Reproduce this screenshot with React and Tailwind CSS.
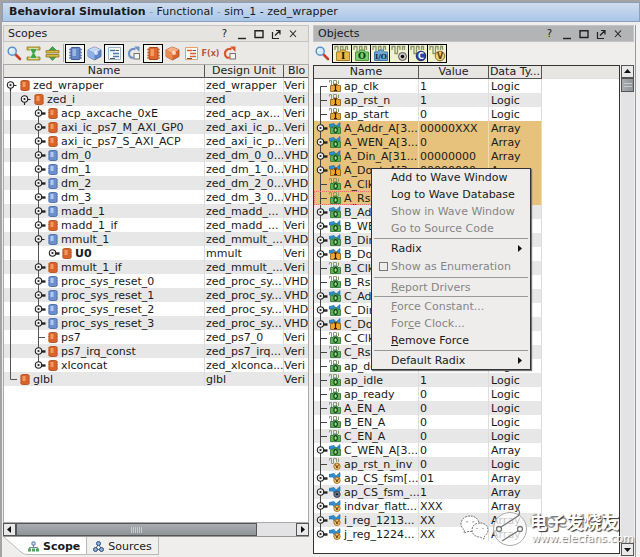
import React from "react";

const SCOPES = [
  ["zed_wrapper", "zed_wrapper", "Veri", 0, "open", "o"],
  ["zed_i", "zed", "Veri", 1, "open", "o"],
  ["acp_axcache_0xE", "zed_acp_ax...", "Veri", 2, "closed", "o"],
  ["axi_ic_ps7_M_AXI_GP0", "zed_axi_ic_p...", "Veri", 2, "closed", "o"],
  ["axi_ic_ps7_S_AXI_ACP", "zed_axi_ic_p...", "Veri", 2, "closed", "o"],
  ["dm_0", "zed_dm_0_0...", "VHD", 2, "closed", "b"],
  ["dm_1", "zed_dm_1_0...", "VHD", 2, "closed", "b"],
  ["dm_2", "zed_dm_2_0...", "VHD", 2, "closed", "b"],
  ["dm_3", "zed_dm_3_0...", "VHD", 2, "closed", "b"],
  ["madd_1", "zed_madd_...", "VHD", 2, "closed", "b"],
  ["madd_1_if", "zed_madd_...", "Veri", 2, "closed", "o"],
  ["mmult_1", "zed_mmult_...", "VHD", 2, "open", "b"],
  ["U0", "mmult", "Veri", 3, "closed", "o"],
  ["mmult_1_if", "zed_mmult_...", "Veri", 2, "closed", "o"],
  ["proc_sys_reset_0", "zed_proc_sy...", "VHD", 2, "closed", "b"],
  ["proc_sys_reset_1", "zed_proc_sy...", "VHD", 2, "closed", "b"],
  ["proc_sys_reset_2", "zed_proc_sy...", "VHD", 2, "closed", "b"],
  ["proc_sys_reset_3", "zed_proc_sy...", "VHD", 2, "closed", "b"],
  ["ps7", "zed_ps7_0", "Veri", 2, "leaf", "o"],
  ["ps7_irq_const", "zed_ps7_irq...", "Veri", 2, "closed", "o"],
  ["xlconcat", "zed_xlconca...", "Veri", 2, "last", "o"],
  ["glbl", "glbl", "Veri", 0, "end", "o"],
];

// name, value, data type, icon kind, expandable, selected
const OBJECTS = [
  ["ap_clk", "1", "Logic", "in"],
  ["ap_rst_n", "1", "Logic", "in"],
  ["ap_start", "0", "Logic", "in"],
  ["A_Addr_A[3...", "00000XXX", "Array", "out", true, true],
  ["A_WEN_A[3...", "0", "Array", "out", true, true],
  ["A_Din_A[31...", "00000000", "Array", "out", true, true],
  ["A_Dout_A[3...", "00000000", "Array", "in", true, true],
  ["A_Clk_A", "0", "Logic", "out", false, true],
  ["A_Rst_A", "0", "Logic", "out", false, true],
  ["B_Addr_A[3...", "00000XXX", "Array", "out", true],
  ["B_WEN_A[3...", "0", "Array", "out", true],
  ["B_Din_A[31...", "00000000", "Array", "out", true],
  ["B_Dout_A[3...", "00000000", "Array", "in", true],
  ["B_Clk_A", "0", "Logic", "out"],
  ["B_Rst_A", "0", "Logic", "out"],
  ["C_Addr_A[3...", "00000XXX", "Array", "out", true],
  ["C_Din_A[31...", "00000000", "Array", "out", true],
  ["C_Dout_A[3...", "00000000", "Array", "in", true],
  ["C_Clk_A", "0", "Logic", "out"],
  ["C_Rst_A", "0", "Logic", "out"],
  ["ap_done", "0", "Logic", "out"],
  ["ap_idle", "1", "Logic", "out"],
  ["ap_ready", "0", "Logic", "out"],
  ["A_EN_A", "0", "Logic", "out"],
  ["B_EN_A", "0", "Logic", "out"],
  ["C_EN_A", "0", "Logic", "out"],
  ["C_WEN_A[3...", "0", "Array", "out", true],
  ["ap_rst_n_inv", "0", "Logic", "var"],
  ["ap_CS_fsm[...", "01", "Array", "var", true],
  ["ap_CS_fsm_...", "1", "Array", "sig", true],
  ["indvar_flatt...", "XXX", "Array", "var", true],
  ["i_reg_1213...", "XX", "Array", "var", true],
  ["j_reg_1224...", "XX", "Array", "var", true],
];

function Handle({ x, open }) {
  return (
    <g stroke="#222">
      {open ? <path d={`M${x} 7V13M${x + 3} 7.5H${x + 6}`} strokeWidth="1.2" /> : <path d={`M${x + 2} 7.5H${x + 7}`} strokeWidth="2.4" />}
      <circle cx={x} cy="7" r="3.2" fill="#f2f2f2" strokeWidth="1.1" />
      <circle cx={x} cy="7" r="1.1" fill="#222" stroke="none" />
    </g>
  );
}

function TreeGuide({ depth, kind }) {
  const x = 6.5 + depth * 14;
  return (
    <svg width={16 + depth * 14} height="14" className="shrink-0" fill="none" aria-hidden="true">
      <g stroke="#555">
        {kind === "end" ? <path d="M6.5 0V7.5H13" /> : <path d={depth === 0 ? "M6.5 7V14" : "M6.5 0V14"} />}
        {depth >= 2 && <path d={kind === "last" ? "M34.5 0V7" : "M34.5 0V14"} />}
        {kind === "leaf" && <path d="M34.5 7.5H41" />}
      </g>
      {kind !== "end" && kind !== "leaf" && <Handle x={x} open={kind === "open"} />}
    </svg>
  );
}

function Chip({ color }) {
  const orange = color === "o";
  return (
    <svg width="10" height="14" className="shrink-0" aria-hidden="true">
      <path d="M0 4H10M0 6.500H10M0 9H10M0 11H10" stroke={orange ? "#d9925f" : "#8ba6d6"} />
      <rect x="1" y="2.5" width="8" height="10" rx="1.5" fill={orange ? "#d9642a" : "#6d8fce"} stroke={orange ? "#b9582a" : "#5474ae"} />
      <path d="M2.5 4H5.5V9H2.5Z" fill={orange ? "#f09a62" : "#b3c8ee"} />
    </svg>
  );
}

const KIND = {
  in: ["#efa62c", "#8b5a10"],
  out: ["#5cae58", "#2c7432"],
  var: ["#f0c860", "#a0662a"],
  sig: ["#667586", "#333f4c"],
};

function SignalIcon({ kind, array }) {
  const [fill, edge] = KIND[kind];
  return (
    <svg width="13" height="14" className="shrink-0" fill="none" aria-hidden="true">
      {array ? (
        <path d="M0 3.5L5 2.5L7 5L11 1.5V6L8 8H5L4 6H0Z" fill="#2f8fd0" stroke="#1d639c" strokeWidth="0.6" />
      ) : (
        <path d="M0.5 3.5V1.5H2.5V6.5H4.5V1.5H7.5V5M9.5 5V1.5" stroke="#8c9a72" />
      )}
      {kind === "in" || kind === "out" ? (
        <g>
          <path d="M1.5 6.5H4L5 5H8L9 6.5H11.5V12.5H1.5Z" fill={fill} stroke={edge} strokeWidth="0.8" />
          {kind === "in" ? <path d="M5 6H8M6.5 6V11.5M5 11.5H8" stroke="#2a1c00" strokeWidth="1.2" /> : <ellipse cx="6.6" cy="9" rx="1.7" ry="2.4" fill="#9ee08c" stroke="#0d3c12" strokeWidth="1.1" />}
        </g>
      ) : (
        <g>
          <circle cx="8" cy="9.3" r="3.2" fill={fill} stroke={edge} strokeWidth="0.9" />
          {kind === "var" ? <path d="M6.5 7.5L8 11L9.5 7.5" stroke="#6b3410" /> : <circle cx="8" cy="9.3" r="1" fill="#111" />}
        </g>
      )}
    </svg>
  );
}

function ObjectGuide({ first, last, expandable }) {
  return (
    <svg width="15" height="14" className="shrink-0" fill="none" aria-hidden="true">
      <path d={first ? "M6.5 14V7.5H13" : last ? "M6.5 0V7" : "M6.5 0V14"} stroke="#444" />
      {expandable ? <Handle x={6.5} /> : <path d="M6.5 7.5H13" stroke="#444" />}
    </svg>
  );
}

function SearchIcon() {
  return (
    <svg width="15" height="15" viewBox="0 0 15 15" fill="none" aria-hidden="true">
      <path d="M8.5 8.5L13 13" stroke="#c8402c" strokeWidth="2.6" strokeLinecap="round" />
      <circle cx="5.2" cy="5.2" r="4" fill="#d6ecfa" stroke="#5a92c8" strokeWidth="1.5" />
      <path d="M3 5A2.2 2.2 0 0 1 5 3" stroke="#fff" strokeWidth="1.2" />
    </svg>
  );
}

function CollapseIcon() {
  return (
    <svg width="15" height="15" viewBox="0 0 15 15" aria-hidden="true">
      <path d="M1 1H14V4H1ZM1 11H14V14H1Z" fill="#d9b944" stroke="#8c7a26" strokeWidth="0.8" />
      <path d="M3.5 2.5H11.5L8.7 7.5L11.5 12.5H3.5L6.3 7.5Z" fill="#3fa34a" stroke="#dff0cf" strokeWidth="0.8" />
    </svg>
  );
}

function ExpandIcon() {
  return (
    <svg width="15" height="15" viewBox="0 0 15 15" aria-hidden="true">
      <path d="M7.5 0.5L11.5 4.5H3.5ZM7.5 14.5L11.5 10.5H3.5Z" fill="#3fa34a" stroke="#2c7434" strokeWidth="0.5" />
      <path d="M1 4.5H14V7H1ZM1 8.5H14V11H1Z" fill="#d9b944" stroke="#8c7a26" strokeWidth="0.8" />
    </svg>
  );
}

function BigChip({ orange }) {
  const dark = orange ? "#a8461a" : "#3c5c9c";
  return (
    <svg width="15" height="15" viewBox="0 0 15 15" aria-hidden="true">
      <path d="M1 3.5H14M1 6.5H14M1 9.5H14M1 12H14" stroke={orange ? "#d08a58" : "#7890b8"} strokeWidth="1.4" />
      <rect x="3" y="1.5" width="9" height="12" rx="1" fill={orange ? "#e0682a" : "#6488c8"} stroke={dark} />
      <path d="M4.5 3H8V10H4.5Z" fill={orange ? "#f49a60" : "#9cb6e4"} />
    </svg>
  );
}

function CubeIcon({ orange }) {
  return (
    <svg width="15" height="15" viewBox="0 0 15 15" aria-hidden="true">
      <path d="M7.5 1L14 3.8V10.5L7.5 14L1 10.5V3.8Z" fill={orange ? "#d8662c" : "#5c86cc"} stroke={orange ? "#a34a20" : "#42659f"} strokeWidth="0.8" />
      <path d="M7.5 1L14 3.8L7.5 7L1 3.8Z" fill={orange ? "#f3b085" : "#c3d8f4"} />
      <path d="M7.5 7V14L1 10.5V3.8Z" fill={orange ? "#e88a52" : "#8fb0e4"} />
      <circle cx="9" cy="7" r="2" fill="#fff" opacity="0.7" />
    </svg>
  );
}

function DocIcon({ orange }) {
  const c = orange ? "#d8642a" : "#4878b8";
  return (
    <svg width="15" height="15" viewBox="0 0 15 15" fill="none" aria-hidden="true">
      <path d="M1.5 1.5H13.5V13.5H1.5Z" fill="#fbfbf6" stroke={orange ? "#e3a06c" : "#9cb4cc"} />
      <path d="M3 4.5H8M6 7.5H12M6 10.5H12" stroke={c} strokeWidth="1.5" />
      <path d="M8.5 4.5H12M3 12.5H8" stroke="#555" />
    </svg>
  );
}

function TaskIcon({ orange }) {
  const c = orange ? "#d8562a" : "#6d93c4";
  return (
    <svg width="15" height="15" viewBox="0 0 15 15" fill="none" aria-hidden="true">
      <path d="M9.500 3.200A4.800 4.800 0 1 0 6.500 12.300" stroke={c} strokeWidth="2.2" />
      <path d="M8 0.5H13.5V6Z" fill={c} />
      <rect x="8" y="7.5" width="5.5" height="5.5" fill="#f4f4f0" stroke="#77736c" />
      <path d="M5 11.500H8" stroke={c} strokeWidth="1.6" />
    </svg>
  );
}

function FilterIcon({ kind }) {
  const badge = {
    I: ["#e9b94a", "#a58030", "#1c1400"],
    O: ["#7fcc6c", "#4f9a48", "#063c0c"],
    "I/O": ["#6fa8d4", "#4478a8", "#0c2c4c"],
  }[kind];
  return (
    <svg width="17" height="17" viewBox="0 0 17 17" fill="none" aria-hidden="true">
      <path d="M1 5V1.5H4V8.5H6.5V1.5H9V5M11.5 5V1.5H13.5V5" stroke="#8c9468" strokeWidth="1.3" />
      {badge && <path d="M2.5 7H5.5L7 5H11L12.5 7H15.5V15.5H2.5Z" fill={badge[0]} stroke={badge[1]} />}
      {badge && (
        <text x="9" y="14" textAnchor="middle" fill={badge[2]} fontSize={kind === "I/O" ? 7 : 9} className="font-['DejaVu_Serif','Liberation_Serif',serif] font-bold">
          {kind}
        </text>
      )}
      {kind === "dot" && (
        <g>
          <circle cx="11.5" cy="11.5" r="4" fill="#c9c9c4" stroke="#555" />
          <circle cx="11.5" cy="11.5" r="1.8" fill="#111" />
        </g>
      )}
      {(kind === "C" || kind === "V") && (
        <g>
          <circle cx="11" cy="11" r="4.8" fill={kind === "C" ? "#2c449c" : "#ecd27a"} stroke={kind === "C" ? "#1c2c70" : "#8a6c24"} />
          <text x="11" y="14" textAnchor="middle" fontSize="8" fill={kind === "C" ? "#fff" : "#5c3c10"} className="font-['DejaVu_Sans',sans-serif] font-bold">
            {kind}
          </text>
        </g>
      )}
    </svg>
  );
}

const WINDOW_ICONS = [
  ["Minimize", <path key="a" d="M2 10.5H10" strokeWidth="1.4" />],
  ["Maximize", <path key="b" d="M2 2.7H10V9.5H2Z" strokeWidth="1.4" />],
  ["Float", <path key="c" d="M2.5 4V10.5H9M5 7.5L9.5 3M6 2.5H10V6.5" strokeWidth="1.2" />],
  ["Close", <path key="d" d="M3 2.5L9 9M9 2.5L3 9" strokeWidth="1.1" />],
];

function PanelHeader({ title, active }) {
  return (
    <header className={`flex h-[17px] shrink-0 items-center border border-[#c4c4c4] pr-[7px] pl-1 ${active ? "bg-[#b2b4b6]" : "bg-[#e6e4e1]"}`}>
      <h2 className="flex-1">{title}</h2>
      <button aria-label="Help" className="h-4 w-[17px] text-[10px] leading-4">?</button>
      {WINDOW_ICONS.map(([name, shape]) => (
        <button key={name} aria-label={name} className="flex h-4 w-[17px] items-center justify-center">
          <svg width="12" height="12" fill="none" stroke="#222">{shape}</svg>
        </button>
      ))}
    </header>
  );
}

function Tool({ label, on, children }) {
  return (
    <button aria-label={label} className={`flex h-[19px] shrink-0 items-center justify-center ${on ? "w-5 border border-black bg-[#f3f3ef]" : "w-[19px]"}`}>
      {children}
    </button>
  );
}

function ScrollButton({ label, d }) {
  return (
    <button aria-label={label} className="flex size-[13px] shrink-0 items-center justify-center border border-[#555] bg-[#e9e9e9]">
      <svg width="7" height="7"><path d={d} fill="#111" /></svg>
    </button>
  );
}

const TH = "h-[13px] overflow-hidden border-r border-b border-[#555] p-0 text-center leading-3 font-normal";

function ScopesPanel() {
  return (
    <section className="flex w-[306px] shrink-0 flex-col">
      <PanelHeader title="Scopes" />
      <div className="flex h-[22px] shrink-0 items-center border-x border-[#d0d0d0] bg-[#ebe9e6] pl-px">
        <Tool label="Search"><SearchIcon /></Tool>
        <Tool label="Collapse all"><CollapseIcon /></Tool>
        <Tool label="Expand all"><ExpandIcon /></Tool>
        <span className="mx-px h-[18px] w-px bg-[#aaa]" />
        <Tool label="VHDL modules" on><BigChip /></Tool>
        <Tool label="VHDL packages"><CubeIcon /></Tool>
        <Tool label="VHDL blocks" on><DocIcon /></Tool>
        <Tool label="VHDL processes"><TaskIcon /></Tool>
        <Tool label="Verilog modules" on><BigChip orange /></Tool>
        <Tool label="Verilog packages"><CubeIcon orange /></Tool>
        <Tool label="Verilog blocks"><DocIcon orange /></Tool>
        <Tool label="Functions"><span className="text-[8px] font-bold text-[#b8583a]">F(x)</span></Tool>
        <Tool label="Verilog tasks"><TaskIcon orange /></Tool>
      </div>
      <div className="flex-1 overflow-hidden border border-[#aaa] bg-white">
        <table className="w-full table-fixed border-separate border-spacing-0">
          <colgroup>
            <col />
            <col className="w-[79px]" />
            <col className="w-[24px]" />
          </colgroup>
          <thead className="bg-[#e8e6e3]">
            <tr>
              <th className={TH}>Name</th>
              <th className={TH}>Design Unit</th>
              <th className="h-[13px] overflow-hidden border-b border-[#555] p-0 pl-1 text-left leading-3 font-normal">Blo</th>
            </tr>
          </thead>
          <tbody>
            {SCOPES.map(([name, unit, block, depth, kind, color]) => (
              <tr key={name} className="even:bg-[#e7e7e7]">
                <td className="h-3.5 border-r border-[#ddd] p-0">
                  <div className="flex h-3.5 items-center">
                    <TreeGuide depth={depth} kind={kind} />
                    <Chip color={color} />
                    <span className={name === "U0" ? "pl-[3px] font-bold" : "pl-[3px]"}>{name}</span>
                  </div>
                </td>
                <td className="h-3.5 overflow-hidden border-r border-[#ddd] p-0 pl-px whitespace-nowrap">{unit}</td>
                <td className="h-3.5 overflow-hidden p-0 whitespace-nowrap">{block}</td>
              </tr>
            ))}
          </tbody>
        </table>
      </div>
      <div className="flex shrink-0 border-b border-[#999] bg-[#e3e3e5]">
        <ScrollButton label="Scroll left" d="M5 0V7L1 3.5Z" />
        <div className="flex flex-1">
          <div className="flex w-[86%] items-center justify-center gap-px border border-[#555] bg-linear-to-b from-[#a9adb1] to-[#8f9498]">
            {[0, 1, 2, 3, 4, 5].map((n) => <span key={n} className="h-1.5 w-px bg-[#c8cbce]" />)}
          </div>
        </div>
        <ScrollButton label="Scroll right" d="M2 0V7L6 3.5Z" />
      </div>
      <div className="flex h-5 shrink-0 items-start" role="tablist">
        <svg width="25" height="18" className="shrink-0" aria-hidden="true">
          <path d="M1 0L18 15Q21 18 25 18V0Z" fill="#fff" />
          <path d="M1 0L18 15Q21 17.500 25 17.500" fill="none" stroke="#bbb" />
        </svg>
        <button role="tab" aria-selected="true" className="flex h-[18px] items-center gap-1 border-r border-b border-[#bbb] bg-white pt-px pr-1.5 font-bold">
          <svg width="11" height="11" fill="none" aria-hidden="true">
            <path d="M5.5 4V6.5M1.5 8V6.5H9.5V8" stroke="#6a8a9a" />
            <path d="M4 1H7V4H4Z" fill="#dce8f4" stroke="#5a80a8" />
            <path d="M0 7.5H3V10.5H0ZM4 7.5H7V10.5H4ZM8 7.5H11V10.5H8Z" fill="#4ea45c" />
          </svg>
          Scope
        </button>
        <button role="tab" aria-selected="false" className="flex h-[18px] items-center gap-1 border-r border-b border-[#bbb] bg-[#f0f0ef] px-1.5 pt-px">
          <svg width="11" height="11" fill="none" aria-hidden="true">
            <path d="M5.5 2.5L2.5 8.5H8.5Z" stroke="#456a9a" />
            <circle cx="5.5" cy="2.5" r="2" fill="#8fb0dc" stroke="#2c4c7c" />
            <circle cx="2.5" cy="8.5" r="2" fill="#8fb0dc" stroke="#2c4c7c" />
            <circle cx="8.500" cy="8.5" r="2" fill="#8fb0dc" stroke="#2c4c7c" />
          </svg>
          Sources
        </button>
      </div>
    </section>
  );
}

function ObjectsPanel() {
  return (
    <section className="ml-1 flex min-w-0 flex-1 flex-col">
      <PanelHeader title="Objects" active />
      <div className="flex h-[23px] shrink-0 items-center">
        <Tool label="Search"><SearchIcon /></Tool>
        {["I", "O", "I/O", "dot", "C", "V"].map((k) => (
          <button key={k} aria-label={`Filter ${k}`} className="-mr-px flex h-[19px] w-5 items-center justify-center border border-black bg-[#f1f2d2]">
            <FilterIcon kind={k} />
          </button>
        ))}
      </div>
      <div className="mb-px flex flex-1">
        <div className="mb-0.5 flex-1 overflow-hidden border border-[#333] bg-white">
          <table className="w-full table-fixed border-separate border-spacing-0">
            <colgroup>
              <col className="w-[105px]" />
              <col className="w-[70px]" />
              <col className="w-[53px]" />
              <col />
            </colgroup>
            <thead className="bg-[#e8e6e3]">
              <tr>
                <th className={TH}>Name</th>
                <th className={TH}>Value</th>
                <th className={`${TH} whitespace-nowrap`}>Data Ty...</th>
                <th className="border-b border-[#e0e0e0] p-0" aria-label="Empty" />
              </tr>
            </thead>
            <tbody>
              {OBJECTS.map(([name, value, type, kind, expandable, selected], i) => {
                const bg = selected ? "bg-[#e6c27c]" : i % 2 ? "bg-[#e7e7e7]" : "bg-white";
                const edge = selected ? "border-r border-[#f2dcae]" : "border-r border-[#ddd]";
                const focus = name === "A_Rst_A" ? "outline-1 -outline-offset-1 outline-dotted outline-[#f06a7a]" : "";
                return (
                  <tr key={name}>
                    <td className={`h-3.5 p-0 ${bg} ${edge} ${focus}`}>
                      <div className="flex h-3.5 items-center">
                        <ObjectGuide first={i === 0} last={i === OBJECTS.length - 1} expandable={expandable} />
                        <SignalIcon kind={kind} array={expandable} />
                        <span className="pl-0.5 whitespace-nowrap">{name}</span>
                      </div>
                    </td>
                    <td className={`h-3.5 p-0 pl-px ${bg} ${edge}`}>{value}</td>
                    <td className={`h-3.5 p-0 pl-0.5 ${bg} ${edge}`}>{type}</td>
                    <td className="p-0" />
                  </tr>
                );
              })}
            </tbody>
          </table>
        </div>
        <div className="ml-px flex w-[13px] flex-col bg-[#e3e3e5]">
          <ScrollButton label="Scroll up" d="M0 5H7L3.5 1Z" />
          <div className="flex h-3.5 flex-col items-center justify-center gap-0.5 border border-[#555] bg-linear-to-r from-[#a9adb1] to-[#8f9498]">
            <span className="h-px w-2 bg-[#c8cbce]" />
            <span className="h-px w-2 bg-[#c8cbce]" />
          </div>
          <div className="flex-1" />
          <ScrollButton label="Scroll down" d="M0 2H7L3.5 6Z" />
        </div>
      </div>
    </section>
  );
}

function MenuItem({ children, disabled, submenu, short }) {
  return (
    <button role="menuitem" disabled={disabled} className={`flex w-full items-center pr-[7px] pl-[19px] text-left disabled:text-[#858585] ${short ? "h-4" : "h-[17px]"}`}>
      <span className="flex-1">{children}</span>
      {submenu && <svg width="5" height="7"><path d="M0 0L4 3.5L0 7Z" fill="#111" /></svg>}
    </button>
  );
}

function Rule() {
  return <hr className="mx-0.5 my-px border-t border-[#999]" />;
}

function ContextMenu() {
  return (
    <div role="menu" className="absolute top-[168px] left-[371px] w-[160px] border border-[#333] bg-[#efedec] shadow-[1px_1px_1px_#777]">
      <MenuItem>Add to Wave Window</MenuItem>
      <MenuItem>Log to Wave Database</MenuItem>
      <MenuItem disabled>Show in Wave Window</MenuItem>
      <MenuItem disabled>Go to Source Code</MenuItem>
      <Rule />
      <MenuItem submenu>Radix</MenuItem>
      <label className="flex h-[19px] items-center gap-[3px] pl-[7px] text-[#858585]">
        <input type="checkbox" disabled className="size-[9px] appearance-none border border-[#777]" />
        Show as Enumeration
      </label>
      <Rule />
      <MenuItem disabled short><u>R</u>eport Drivers</MenuItem>
      <Rule />
      <MenuItem disabled><u>F</u>orce Constant...</MenuItem>
      <MenuItem disabled>For<u>c</u>e Clock...</MenuItem>
      <MenuItem><u>R</u>emove Force</MenuItem>
      <Rule />
      <MenuItem submenu>Default Radix</MenuItem>
    </div>
  );
}

function Watermark() {
  return (
    <div className="pointer-events-none absolute right-1.5 bottom-2 flex items-center">
      <svg width="30" height="26" fill="#fff" stroke="#777" strokeDasharray="2 1" className="mr-0.5" aria-hidden="true">
        <path d="M10 1C4 1 1 5 1 9C1 12 3 14 4.5 15L4 18L8 16.5H13C18 15 19 12 19 9C19 4 15 1 10 1Z" />
        <path d="M20 8C15 8 12 11 12 15C12 19 15 22 20 22L24 24L24.5 21C27 19.5 28 17 28 15C28 11 25 8 20 8Z" />
        <path d="M7 6V7.5M13 6V7.5M17 13V14M23 13V14" strokeDasharray="none" />
      </svg>
      <svg width="38" height="42" fill="none" aria-hidden="true">
        <circle cx="18" cy="22" r="16.5" fill="#fff" fillOpacity="0.75" stroke="#aaa" />
        <g stroke="#777" strokeWidth="1.3">
          <circle cx="7" cy="22" r="2.5" />
          <circle cx="28" cy="22" r="2.5" />
          <path d="M9 20L26 9C28 7 28 4 25 1M26 24L10 34" />
        </g>
      </svg>
      <div className="relative">
        <span className="absolute top-0 left-0 text-[19px] leading-5 text-[#777] opacity-70">OpenHW</span>
        <p className="relative font-['Noto_Sans_CJK_SC',sans-serif] text-[18px] leading-5 font-bold text-white [text-shadow:1px_1px_1px_#333]">电子发烧友</p>
        <p className="relative pt-0.5 pl-0.5 leading-3 text-white [text-shadow:1px_1px_1px_#666]">www.elecfans.com</p>
      </div>
    </div>
  );
}

export default function App() {
  return (
    <main className="relative flex min-h-screen flex-col overflow-hidden border-t-2 border-l-2 border-[#a3a3a3] bg-[#efeeed] font-['DejaVu_Sans','Liberation_Sans',sans-serif] text-[11px] leading-[13px] text-[#1a1a1a]">
      <h1 className="h-5 shrink-0 border border-[#8b9fba] bg-linear-to-b from-[#d0dcec] to-[#a9c6ea] pl-1.5 leading-[18px]">
        <b>Behavioral Simulation</b> <span className="text-[#8c9cb0]">-</span> Functional <span className="text-[#8c9cb0]">-</span> sim_1 - zed_wrapper
      </h1>
      <div className="flex flex-1 pt-[3px] pl-px">
        <ScopesPanel />
        <ObjectsPanel />
        <div className="ml-px w-[5px] shrink-0 border-l border-[#999] bg-[#f2f2f2]" />
      </div>
      <Watermark />
      <div className="absolute -top-0.5 -left-0.5">
        <ContextMenu />
      </div>
    </main>
  );
}
